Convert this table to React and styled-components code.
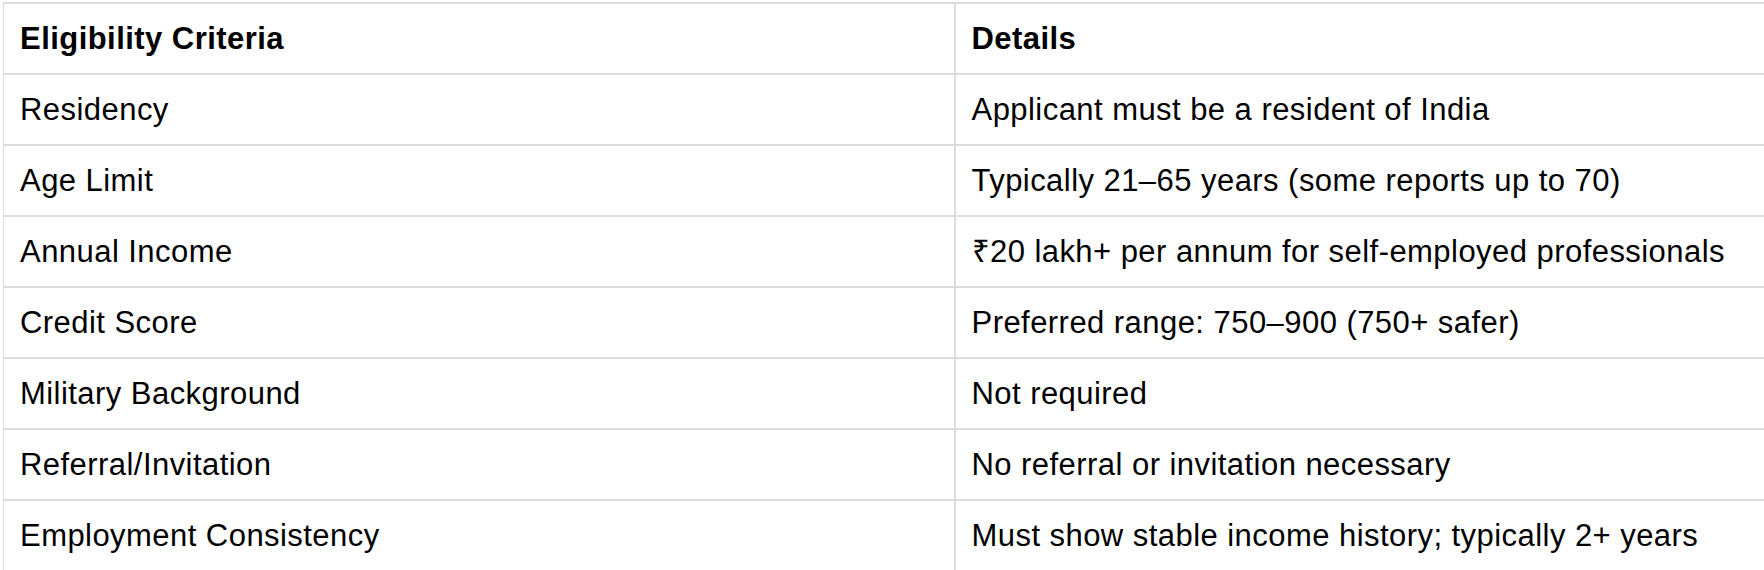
import React from 'react'
import styled, { createGlobalStyle } from 'styled-components'

const GlobalStyle = createGlobalStyle`
  html, body {
    margin: 0;
    padding: 0;
    background: #fff;
    overflow: hidden;
  }
  body {
    font-family: "Liberation Sans", Arial, sans-serif;
  }
`

const Page = styled.div`
  width: 1764px;
  height: 570px;
  overflow: hidden;
  padding: 2px 0 0 3px;
  box-sizing: border-box;
`

const Table = styled.table`
  border-collapse: collapse;
  width: 1900px;
  table-layout: fixed;
  color: #000;
  font-size: 31px;
  letter-spacing: 0.45px;
`

const Cell = styled.td`
  border-top: 2px solid #dcdcdc;
  border-bottom: 2px solid #dcdcdc;
  border-left: ${p => (p.$first ? '1px' : '2px')} solid #dcdcdc;
  padding: 16px;
  line-height: 37px;
  font-weight: ${p => (p.$head ? 700 : 400)};
  text-align: left;
  white-space: nowrap;
  vertical-align: middle;
`

const rows = [
  ['Residency', 'Applicant must be a resident of India'],
  ['Age Limit', 'Typically 21–65 years (some reports up to 70)'],
  ['Annual Income', '₹20 lakh+ per annum for self-employed professionals'],
  ['Credit Score', 'Preferred range: 750–900 (750+ safer)'],
  ['Military Background', 'Not required'],
  ['Referral/Invitation', 'No referral or invitation necessary'],
  ['Employment Consistency', 'Must show stable income history; typically 2+ years'],
]

export default function App() {
  return (
    <>
      <GlobalStyle />
      <Page>
        <Table>
          <colgroup>
            <col style={{ width: 951 }} />
            <col />
          </colgroup>
          <thead>
            <tr>
              <Cell as="th" $head $first>Eligibility Criteria</Cell>
              <Cell as="th" $head>Details</Cell>
            </tr>
          </thead>
          <tbody>
            {rows.map(([k, v]) => (
              <tr key={k}>
                <Cell $first>{k}</Cell>
                <Cell>{v}</Cell>
              </tr>
            ))}
          </tbody>
        </Table>
      </Page>
    </>
  )
}
